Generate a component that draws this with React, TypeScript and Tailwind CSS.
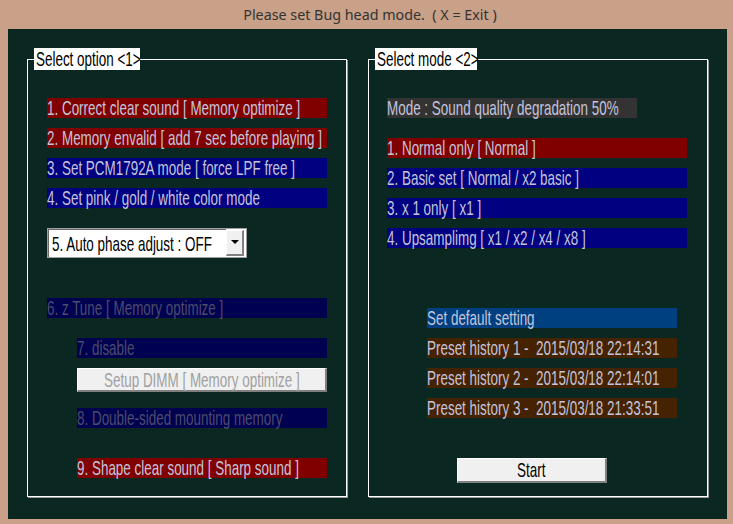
import React from "react";

function Txt({ text, center, color }: { text: string; center?: boolean; color: string }) {
  return (
    <span
      className={`inline-block shrink-0 ${center ? "origin-center" : "origin-left"} scale-x-[0.64] whitespace-pre font-['Liberation_Sans',Arial,sans-serif] text-[21px] leading-5 ${color}`}
    >
      {text}
    </span>
  );
}

function Row({ text, bg, color, w }: { text: string; bg: string; color: string; w: string }) {
  return (
    <div className={`h-5 ${w} ${bg} flex items-center whitespace-nowrap`}>
      <Txt text={text} color={color} />
    </div>
  );
}

function Legend({ text, w }: { text: string; w: string }) {
  return (
    <div className={`absolute left-[6px] top-[-12px] h-[22px] ${w} bg-white pl-[2px] flex items-center`}>
      <Txt text={text} color="text-black" />
    </div>
  );
}

const RAISED =
  "bg-[#f0f0f0] border-t border-l border-white border-r-2 border-b-2 border-r-[#808080] border-b-[#808080]";

export default function App() {
  const lt = "text-[#c4c4dc]";
  const dim = "text-[#4c4c6c]";
  return (
    <div className="w-[733px] h-[524px] bg-[#c9a088] flex flex-col overflow-hidden">
      <div className="h-[29px] pl-[7px] flex items-center justify-center text-[#333333] font-['Noto_Sans',sans-serif] text-[14.3px] whitespace-pre">
        {"Please set Bug head mode.  ( X = Exit )"}
      </div>
      <div className="ml-[8px] w-[719px] h-[490px] bg-[#0b2721] pt-[30px] pl-[19px] flex gap-[21px]">
        {/* Left group */}
        <div className="relative w-[320px] h-[438px] border border-white shadow-[1px_1px_0_#9a9a9a] pl-[19px] pt-[38px] flex flex-col">
          <Legend text="Select option <1>" w="w-[106px]" />
          <Row text="1. Correct clear sound [ Memory optimize ]" bg="bg-[#800000]" color={lt} w="w-[280px]" />
          <div className="h-[10px]" />
          <Row text="2. Memory envalid [ add 7 sec before playing ]" bg="bg-[#800000]" color={lt} w="w-[280px]" />
          <div className="h-[10px]" />
          <Row text="3. Set PCM1792A mode [ force LPF free ]" bg="bg-[#000080]" color={lt} w="w-[280px]" />
          <div className="h-[10px]" />
          <Row text="4. Set pink / gold / white color mode" bg="bg-[#000080]" color={lt} w="w-[280px]" />
          <div className="mt-[20px] w-[200px] h-[30px] bg-white border border-[#a0a0a0] flex items-center">
            <div className="w-[178px] pl-[3px] border-t border-l border-[#6a6a6a] h-full flex items-center">
              <Txt text="5. Auto phase adjust : OFF" color="text-black" />
            </div>
            <div className={`w-[18px] h-[26px] mr-[1px] ${RAISED} flex items-center justify-center`}>
              <svg width="8" height="5" viewBox="0 0 8 5">
                <path d="M0 0 L8 0 L4 4 Z" fill="#000" />
              </svg>
            </div>
          </div>
          <div className="h-[40px]" />
          <Row text="6. z Tune [ Memory optimize ]" bg="bg-[#000050]" color={dim} w="w-[280px]" />
          <div className="pl-[30px] flex flex-col">
            <div className="h-[20px]" />
            <Row text="7. disable" bg="bg-[#000050]" color={dim} w="w-[250px]" />
            <div className={`mt-[10px] w-[250px] h-[24px] ${RAISED} flex items-center justify-center`}>
              <Txt text="Setup DIMM [ Memory optimize ]" color="text-[#a0a0a0]" center />
            </div>
            <div className="h-[16px]" />
            <Row text="8. Double-sided mounting memory" bg="bg-[#000050]" color={dim} w="w-[250px]" />
            <div className="h-[30px]" />
            <Row text="9. Shape clear sound [ Sharp sound ]" bg="bg-[#800000]" color={lt} w="w-[250px]" />
          </div>
        </div>
        {/* Right group */}
        <div className="relative w-[340px] h-[438px] border border-white shadow-[1px_1px_0_#9a9a9a] pl-[18px] pt-[38px] flex flex-col">
          <Legend text="Select mode <2>" w="w-[102px]" />
          <Row text="Mode : Sound quality degradation 50%" bg="bg-[#333333]" color={lt} w="w-[250px]" />
          <div className="h-[20px]" />
          <Row text="1. Normal only [ Normal ]" bg="bg-[#800000]" color={lt} w="w-[300px]" />
          <div className="h-[10px]" />
          <Row text="2. Basic set [ Normal / x2 basic ]" bg="bg-[#000080]" color={lt} w="w-[300px]" />
          <div className="h-[10px]" />
          <Row text="3. x 1 only [ x1 ]" bg="bg-[#000080]" color={lt} w="w-[300px]" />
          <div className="h-[10px]" />
          <Row text="4. Upsamplimg [ x1 / x2 / x4 / x8 ]" bg="bg-[#000080]" color={lt} w="w-[300px]" />
          <div className="pl-[40px] flex flex-col">
            <div className="h-[60px]" />
            <Row text="Set default setting" bg="bg-[#004080]" color={lt} w="w-[250px]" />
            <div className="h-[10px]" />
            <Row text="Preset history 1 -  2015/03/18 22:14:31" bg="bg-[#452200]" color={lt} w="w-[250px]" />
            <div className="h-[10px]" />
            <Row text="Preset history 2 -  2015/03/18 22:14:01" bg="bg-[#452200]" color={lt} w="w-[250px]" />
            <div className="h-[10px]" />
            <Row text="Preset history 3 -  2015/03/18 21:33:51" bg="bg-[#452200]" color={lt} w="w-[250px]" />
          </div>
          <div className={`ml-[70px] mt-[40px] w-[150px] h-[25px] ${RAISED} flex items-center justify-center`}>
            <Txt text="Start" color="text-black" center />
          </div>
        </div>
      </div>
    </div>
  );
}
